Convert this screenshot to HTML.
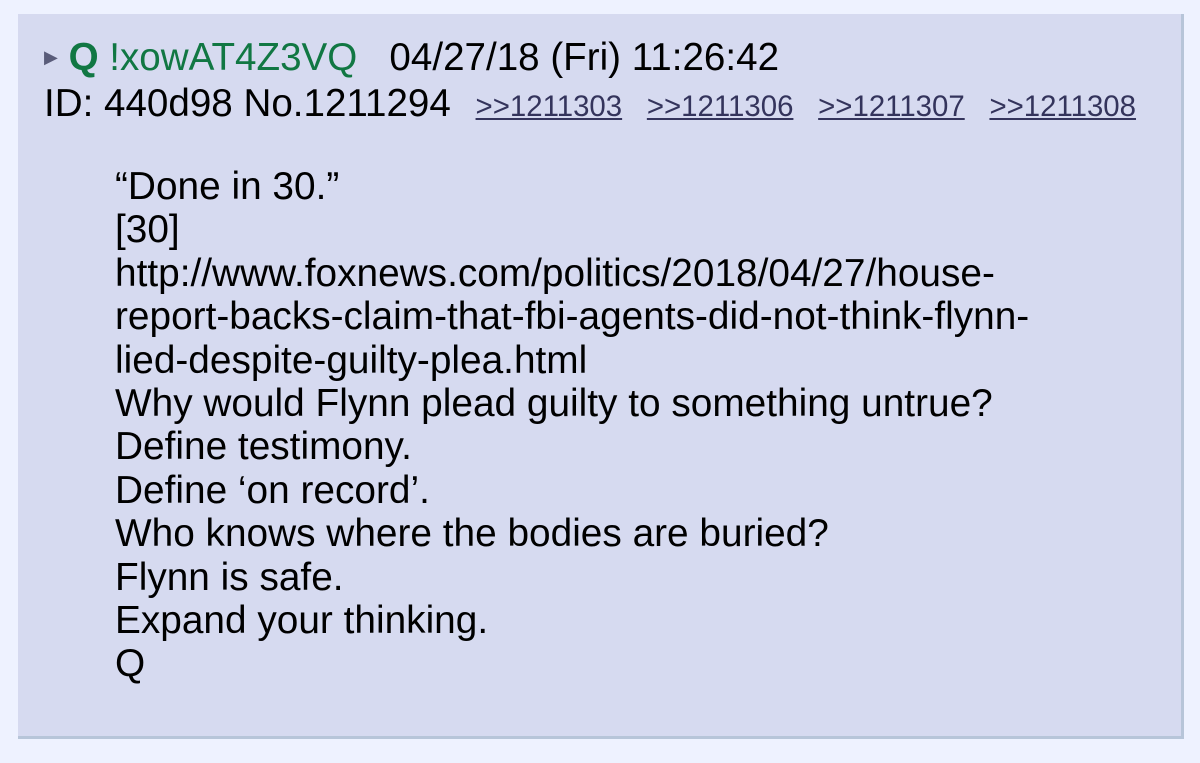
<!DOCTYPE html>
<html><head><style>
body{margin:0;width:1200px;height:763px;background:#eef2ff;font-family:"Liberation Sans",Arial,sans-serif;overflow:hidden;position:relative}
.box{position:absolute;left:18px;top:14px;width:1163px;height:722px;background:#d6daf0;border-right:3px solid #b7c5d9;border-bottom:3px solid #b7c5d9}
.h{position:absolute;left:26px;font-size:38.6px;color:#000;white-space:nowrap;line-height:44px}
.g{color:#117743}
a{color:#34345c;text-decoration:underline;font-size:29.4px;margin-left:14px}
.body{position:absolute;left:97px;top:151px;font-size:38.8px;line-height:43.4px;color:#000;white-space:nowrap}
</style></head><body>
<div class="box">
<div class="h" style="top:22px"><span style="font-size:18px;color:#5a5c7a;position:relative;top:-7px">&#9654;</span> <b class="g">Q</b> <span class="g">!xowAT4Z3VQ</span>&nbsp;&nbsp; 04/27/18 (Fri) 11:26:42</div>
<div class="h" style="top:68px">ID: 440d98 No.1211294 <a>&gt;&gt;1211303</a> <a>&gt;&gt;1211306</a> <a>&gt;&gt;1211307</a> <a>&gt;&gt;1211308</a></div>
<div class="body">“Done in 30.”<br>[30]<br>http://www.foxnews.com/politics/2018/04/27/house-<br>report-backs-claim-that-fbi-agents-did-not-think-flynn-<br>lied-despite-guilty-plea.html<br>Why would Flynn plead guilty to something untrue?<br>Define testimony.<br>Define ‘on record’.<br>Who knows where the bodies are buried?<br>Flynn is safe.<br>Expand your thinking.<br>Q</div>
</div>
</body></html>
